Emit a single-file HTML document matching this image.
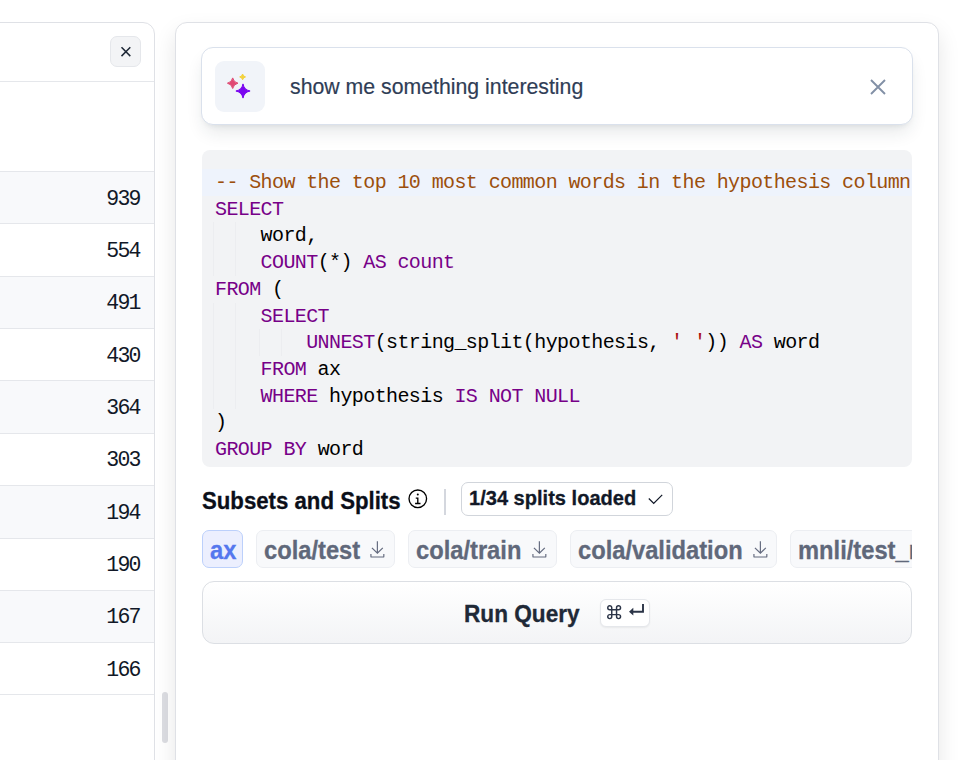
<!DOCTYPE html>
<html>
<head>
<meta charset="utf-8">
<style>
*{box-sizing:border-box;margin:0;padding:0}
html,body{width:963px;height:760px;overflow:hidden;background:#fff;font-family:"Liberation Sans",sans-serif;position:relative}
.abs{position:absolute}
#lp{left:-60px;top:22px;width:215px;height:800px;border:1px solid #dfe1e6;border-radius:12px;background:#fff;overflow:hidden}
#lp .hdr{position:absolute;left:0;right:0;top:0;height:59px;border-bottom:1px solid #e5e7eb}
#lp .xbtn{position:absolute;left:169px;top:13px;width:31px;height:31px;border:1px solid #e5e7eb;border-radius:7px;background:#f3f4f6}
.row{position:absolute;left:0;right:0;height:52.37px;border-top:1px solid #e5e7eb;font-family:"Liberation Mono",monospace;font-size:21.5px;letter-spacing:-1.7px;color:#111827;text-align:right;padding-right:14.2px;padding-top:0.5px;line-height:52.4px}
.row.odd{background:#f8f9fb}
#thumb{left:162px;top:692px;width:6px;height:51px;border-radius:3px;background:#dcdde2}
#rp{left:175px;top:22px;width:764px;height:800px;border:1px solid #dfe1e6;border-radius:12px;background:#fff;box-shadow:0 10px 22px rgba(0,0,0,0.1)}
#search{left:201px;top:47px;width:712px;height:78px;border:1px solid #dae1ec;border-radius:12px;background:#fff;box-shadow:0 10px 18px -3px rgba(30,41,59,0.11),0 4px 6px -4px rgba(30,41,59,0.11)}
#spark{left:214.5px;top:61px;width:50.5px;height:50.5px;border-radius:9px;background:#f1f4f9}
#stext{left:290px;top:75.8px;font-size:22px;line-height:22px;color:#2f3d56;-webkit-text-stroke:0.2px #2f3d56;white-space:pre;transform:scaleX(0.967);transform-origin:0 0}
#sx{left:869.5px;top:78.5px}
#code{left:202px;top:150px;width:710px;height:316.5px;background:#f2f3f5;border-radius:8px;overflow:hidden;font-family:"Liberation Mono",monospace;font-size:20px;letter-spacing:-0.6px;color:#000}
#code .ln{position:absolute;left:0;right:0;height:26.68px;line-height:26.68px;padding-left:13px;padding-top:1px;white-space:pre}
#code .act{background:#eef3fc}
.kw{color:#770088}
.cm{color:#9c4f0c}
.st{color:#aa1111}
#heading{left:202px;top:488.5px;font-size:24.4px;line-height:24.4px;font-weight:700;color:#0b0f19;-webkit-text-stroke:0.3px #0b0f19;white-space:pre;transform:scaleX(0.91);transform-origin:0 0}
#info{left:406.55px;top:487.75px}
#vsep{left:444.2px;top:488.5px;width:1.6px;height:26px;background:#d4d7de}
#splits{left:461px;top:481.5px;width:211.5px;height:34px;border:1px solid #d1d5db;border-radius:7px;background:#fff}
#splits span{position:absolute;left:7px;top:4px;font-size:21px;line-height:21px;font-weight:700;color:#111827;-webkit-text-stroke:0.3px #111827;white-space:pre;transform:scaleX(0.955);transform-origin:0 0}
#chips{left:202px;top:530px;width:710px;height:38px;overflow:hidden}
.chip{position:absolute;top:0;height:37.5px;border:1px solid #eceef2;border-radius:7px;background:#f8f9fb;color:#60687a;-webkit-text-stroke:0.3px currentColor;font-weight:700;font-size:25px;white-space:pre}
.chip span{position:absolute;left:6.5px;top:7px;line-height:25px;transform:scaleX(0.948);transform-origin:0 0}
.chip.sel{background:#eceffe;border-color:#bcd0fb;color:#5577ee}
.ig{position:absolute;width:1px;background:#ecedf0}
#run{left:202px;top:581.4px;width:710px;height:62.6px;border:1px solid #dcdfe4;border-radius:12px;background:linear-gradient(#fff,#f3f4f6)}
#runt{left:464px;top:602.8px;font-size:23.7px;line-height:23.7px;font-weight:700;color:#1f2937;-webkit-text-stroke:0.3px #1f2937;white-space:pre;transform:scaleX(0.955);transform-origin:0 0}
#kbd{left:600.2px;top:599.3px;width:49.6px;height:27.6px;border:1px solid #e5e7eb;border-radius:6px;background:#fff;box-shadow:0 1px 2px rgba(0,0,0,0.06)}
</style>
</head>
<body>
<div id="lp" class="abs">
<div class="hdr"><div class="xbtn"><svg width="31" height="31" viewBox="0 0 31 31" style="position:absolute;left:-1px;top:-1px"><path d="M11.5 11.3L20.3 20.1M20.3 11.3L11.5 20.1" stroke="#1f2937" stroke-width="1.5" fill="none"/></svg></div></div>
<div class="row odd" style="top:148.00px">939</div>
<div class="row" style="top:200.37px">554</div>
<div class="row odd" style="top:252.74px">491</div>
<div class="row" style="top:305.11px">430</div>
<div class="row odd" style="top:357.48px">364</div>
<div class="row" style="top:409.85px">303</div>
<div class="row odd" style="top:462.22px">194</div>
<div class="row" style="top:514.59px">190</div>
<div class="row odd" style="top:566.96px">167</div>
<div class="row" style="top:619.33px;border-bottom:1px solid #e5e7eb">166</div>
</div>
<div id="thumb" class="abs"></div>
<div id="rp" class="abs"></div>
<div id="search" class="abs"></div>
<div id="spark" class="abs"></div>
<svg class="abs" style="left:214.5px;top:61px" width="51" height="51" viewBox="0 0 51 51"><path d="M17.7 16.9Q18.60 21.30 23.0 22.2Q18.60 23.10 17.7 27.5Q16.80 23.10 12.399999999999999 22.2Q16.80 21.30 17.7 16.9Z" fill="#e04a74" stroke="#e04a74" stroke-width="1" stroke-linejoin="round"/><path d="M27.6 13.0Q28.09 15.41 30.5 15.9Q28.09 16.39 27.6 18.8Q27.11 16.39 24.700000000000003 15.9Q27.11 15.41 27.6 13.0Z" fill="#f3d23c" stroke="#f3d23c" stroke-width="1" stroke-linejoin="round"/><path d="M28.0 22.9Q29.21 28.79 35.1 30Q29.21 31.21 28.0 37.1Q26.79 31.21 20.9 30Q26.79 28.79 28.0 22.9Z" fill="#7a06f0" stroke="#7a06f0" stroke-width="1" stroke-linejoin="round"/></svg>
<div id="stext" class="abs">show me something interesting</div>
<svg id="sx" class="abs" width="16" height="16" viewBox="0 0 16 16"><path d="M1 1L15 15M15 1L1 15" stroke="#8290a6" stroke-width="1.9" fill="none"/></svg>
<div id="code" class="abs">
<div class="ig" style="left:11px;top:72.46px;height:53.36px"></div>
<div class="ig" style="left:33px;top:72.46px;height:53.36px"></div>
<div class="ig" style="left:11px;top:152.50px;height:106.72px"></div>
<div class="ig" style="left:33px;top:152.50px;height:106.72px"></div>
<div class="ig" style="left:56.5px;top:179.18px;height:26.68px"></div>
<div class="ig" style="left:79px;top:179.18px;height:26.68px"></div>
<div class="ln act" style="top:19.10px"><span class="cm">-- Show the top 10 most common words in the hypothesis column</span></div>
<div class="ln" style="top:45.78px"><span class="kw">SELECT</span></div>
<div class="ln" style="top:72.46px">    word,</div>
<div class="ln" style="top:99.14px">    <span class="kw">COUNT</span>(*) <span class="kw">AS count</span></div>
<div class="ln" style="top:125.82px"><span class="kw">FROM</span> (</div>
<div class="ln" style="top:152.50px">    <span class="kw">SELECT</span></div>
<div class="ln" style="top:179.18px">        <span class="kw">UNNEST</span>(string_split(hypothesis, <span class="st">' '</span>)) <span class="kw">AS</span> word</div>
<div class="ln" style="top:205.86px">    <span class="kw">FROM</span> ax</div>
<div class="ln" style="top:232.54px">    <span class="kw">WHERE</span> hypothesis <span class="kw">IS</span> <span class="kw">NOT</span> <span class="kw">NULL</span></div>
<div class="ln" style="top:259.22px">)</div>
<div class="ln" style="top:285.90px"><span class="kw">GROUP</span> <span class="kw">BY</span> word</div>
</div>
<div id="heading" class="abs">Subsets and Splits</div>
<svg id="info" class="abs" width="21.6" height="21.6" viewBox="0 0 32 32" fill="#000"><path d="M17 22v-8h-4v2h2v6h-3v2h8v-2h-3z"/><path d="M16 8a1.5 1.5 0 1 0 1.5 1.5A1.5 1.5 0 0 0 16 8z"/><path d="M16 30a14 14 0 1 1 14-14a14 14 0 0 1-14 14zm0-26a12 12 0 1 0 12 12A12 12 0 0 0 16 4z"/></svg>
<div id="vsep" class="abs"></div>
<div id="splits" class="abs"><span>1/34 splits loaded</span><svg style="position:absolute;left:183.6px;top:7.2px" width="19" height="19" viewBox="0 0 32 32" fill="#111827"><path d="M13 24l-9-9 1.41-1.41L13 21.17 26.59 7.59 28 9l-15 15z"/></svg></div>
<div id="chips" class="abs">
<div class="chip sel" style="left:0.3px;width:40.7px"><span>ax</span></div>
<div class="chip" style="left:54.3px;width:138.6px"><span>cola/test</span><svg style="position:absolute;right:6.9px;top:8.7px" width="18.75" height="18.75" viewBox="0 0 32 32" fill="#636a7e"><path d="M26 24v4H6v-4H4v4a2 2 0 0 0 2 2h20a2 2 0 0 0 2-2v-4zm0-10l-1.41-1.41L17 20.17V2h-2v18.17l-7.59-7.58L6 14l10 10 10-10z"/></svg></div>
<div class="chip" style="left:206.3px;width:148.5px"><span>cola/train</span><svg style="position:absolute;right:6.9px;top:8.7px" width="18.75" height="18.75" viewBox="0 0 32 32" fill="#636a7e"><path d="M26 24v4H6v-4H4v4a2 2 0 0 0 2 2h20a2 2 0 0 0 2-2v-4zm0-10l-1.41-1.41L17 20.17V2h-2v18.17l-7.59-7.58L6 14l10 10 10-10z"/></svg></div>
<div class="chip" style="left:368.2px;width:207.2px"><span>cola/validation</span><svg style="position:absolute;right:6.9px;top:8.7px" width="18.75" height="18.75" viewBox="0 0 32 32" fill="#636a7e"><path d="M26 24v4H6v-4H4v4a2 2 0 0 0 2 2h20a2 2 0 0 0 2-2v-4zm0-10l-1.41-1.41L17 20.17V2h-2v18.17l-7.59-7.58L6 14l10 10 10-10z"/></svg></div>
<div class="chip" style="left:588.3px;width:200px"><span>mnli/test_matched</span><svg style="position:absolute;right:6.9px;top:8.7px" width="18.75" height="18.75" viewBox="0 0 32 32" fill="#636a7e"><path d="M26 24v4H6v-4H4v4a2 2 0 0 0 2 2h20a2 2 0 0 0 2-2v-4zm0-10l-1.41-1.41L17 20.17V2h-2v18.17l-7.59-7.58L6 14l10 10 10-10z"/></svg></div>
</div>
<div id="run" class="abs"></div>
<div id="runt" class="abs">Run Query</div>
<div id="kbd" class="abs"><svg style="position:absolute;left:6.1px;top:4.9px" width="15" height="15" viewBox="0 0 15 15" fill="none" stroke="#2b3447" stroke-width="1.45"><path d="M4.75 11.6V2.75A2 2 0 1 0 2.75 4.75H11.55A2 2 0 1 0 9.55 2.75V11.6A2 2 0 1 0 11.55 9.6H2.75A2 2 0 1 0 4.75 11.6Z"/></svg><svg style="position:absolute;left:28.2px;top:3.7px" width="17" height="14" viewBox="0 0 17 14" fill="#2b3447"><path d="M14 0V7.7H4" stroke="#2b3447" stroke-width="1.9" fill="none"/><path d="M0 7.7L4.3 3.8V11.6Z"/></svg></div>
</body>
</html>
